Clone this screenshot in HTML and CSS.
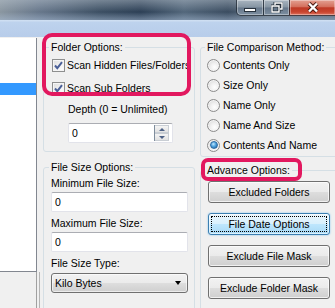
FILE: index.html
```html
<!DOCTYPE html>
<html lang="en">
<head>
    <meta charset="UTF-8">
    <meta name="viewport" content="width=device-width, initial-scale=1.0">
    <title>Compare Options</title>
    <link rel="stylesheet" href="styles.css">
</head>
<body>
    <div class="titlebar">
        <div class="caption-buttons">
            <div class="cap-btn cap-min"><span class="min-glyph"></span></div>
            <div class="cap-btn cap-max">
                <svg width="12" height="11" viewBox="0 0 12 11">
                    <path d="M4 3V1h7v6H9 M1 4h7v6H1z" fill="none" stroke="#27323d" stroke-width="3"/>
                    <path d="M4 3V1h7v6H9 M1 4h7v6H1z" fill="none" stroke="#fff" stroke-width="1.4"/>
                </svg>
            </div>
            <div class="cap-btn cap-close">
                <svg width="14" height="11" viewBox="0 0 14 11">
                    <path d="M3 1.5l8 8 M11 1.5l-8 8" stroke="#4a1a12" stroke-width="4.2"/>
                    <path d="M3 1.5l8 8 M11 1.5l-8 8" stroke="#fff" stroke-width="2.4"/>
                </svg>
            </div>
        </div>
    </div>
    <div class="menu-band"></div>

    <div class="content">
        <div class="left-col">
            <div class="folder-list">
                <div class="list-row selected"></div>
            </div>
            <div class="splitter"></div>
        </div>

        <div class="mid-col">
            <fieldset class="group folder-group">
                <legend>Folder Options:</legend>
                <div class="check-row">
                    <span class="checkbox">
                        <svg width="13" height="13" viewBox="0 0 13 13">
                            <path d="M3 6.5l2.3 2.6L10 3.2" fill="none" stroke="#4a5f97" stroke-width="2"/>
                        </svg>
                    </span>
                    Scan Hidden Files/Folders
                </div>
                <div class="check-row second">
                    <span class="checkbox">
                        <svg width="13" height="13" viewBox="0 0 13 13">
                            <path d="M3 6.5l2.3 2.6L10 3.2" fill="none" stroke="#4a5f97" stroke-width="2"/>
                        </svg>
                    </span>
                    Scan Sub Folders
                </div>
                <div class="depth-label">Depth (0 = Unlimited)</div>
                <div class="spin-box">
                    <span class="field-value">0</span>
                    <div class="spin-buttons">
                        <div class="spin-btn"><span class="arrow-up"></span></div>
                        <div class="spin-btn"><span class="arrow-down"></span></div>
                    </div>
                </div>
            </fieldset>

            <fieldset class="group size-group">
                <legend>File Size Options:</legend>
                <div class="field-label first">Minimum File Size:</div>
                <div class="text-field">0</div>
                <div class="field-label">Maximum File Size:</div>
                <div class="text-field">0</div>
                <div class="field-label">File Size Type:</div>
                <div class="combo">
                    <span>Kilo Bytes</span>
                    <span class="combo-arrow"></span>
                </div>
            </fieldset>

            <div class="highlight highlight-folder"></div>
        </div>

        <div class="right-col">
            <fieldset class="group compare-group">
                <legend>File Comparison Method:</legend>
                <div class="radio-row"><span class="radio"></span>Contents Only</div>
                <div class="radio-row"><span class="radio"></span>Size Only</div>
                <div class="radio-row"><span class="radio"></span>Name Only</div>
                <div class="radio-row"><span class="radio"></span>Name And Size</div>
                <div class="radio-row"><span class="radio checked"></span>Contents And Name</div>
            </fieldset>

            <fieldset class="group advance-group">
                <legend>Advance Options:</legend>
                <button class="btn">Excluded Folders</button>
                <button class="btn focused"><span class="focus-ring">File Date Options</span></button>
                <button class="btn">Exclude File Mask</button>
                <button class="btn">Exclude Folder Mask</button>
            </fieldset>

            <div class="highlight highlight-advance"></div>
        </div>
    </div>
</body>
</html>
```

FILE: styles.css
```css
* {
    box-sizing: border-box;
}

body {
    margin: 0;
    width: 335px;
    height: 308px;
    overflow: hidden;
    background-color: #f0f0f0;
    font-family: "Liberation Sans", Arial, sans-serif;
    font-size: 10.5px;
    color: #000;
}

/* Window chrome */
.titlebar {
    height: 20px;
    display: flex;
    justify-content: flex-end;
    align-items: flex-start;
    background:
        linear-gradient(180deg, rgba(190, 200, 210, 0.45) 0%, rgba(0, 0, 0, 0) 60%, rgba(170, 190, 215, 0.5) 100%),
        linear-gradient(90deg, #8a96a0 0%, #66768a 12%, #3b4e62 30%, #2c3f55 42%, #52667a 55%, #3a4c60 68%, #6b7b8a 80%, #56687a 100%);
}

.caption-buttons {
    display: flex;
    height: 16px;
    margin-right: -1px;
}

.cap-btn {
    height: 16px;
    display: flex;
    align-items: center;
    justify-content: center;
    border: 1px solid rgba(20, 30, 40, 0.75);
    border-top: none;
    box-shadow: inset 0 0 0 1px rgba(255, 255, 255, 0.35);
}

.cap-min {
    width: 27px;
    border-bottom-left-radius: 5px;
    border-right: none;
    background: linear-gradient(180deg, #a9b5c0 0%, #8594a2 48%, #66778a 52%, #7d8fa1 100%);
}

.cap-max {
    width: 26px;
    border-right: none;
    background: linear-gradient(180deg, #a9b5c0 0%, #8594a2 48%, #66778a 52%, #7d8fa1 100%);
}

.cap-close {
    width: 47px;
    background: linear-gradient(180deg, #e3a092 0%, #d4705d 45%, #bf3a26 52%, #c9452f 80%, #df7460 100%);
}

.min-glyph {
    width: 12px;
    height: 4px;
    margin-top: 5px;
    background-color: #fff;
    border: 1px solid #27323d;
}

.menu-band {
    height: 17px;
    background: linear-gradient(180deg, #d2e1f3 0%, #bdd2ed 15%, #b8cdea 100%);
}

/* Main area */
.content {
    display: flex;
    align-items: flex-start;
    height: 271px;
}

.left-col {
    width: 37px;
    height: 271px;
    display: flex;
    flex-direction: column;
}

.folder-list {
    margin-top: 1px;
    height: 234px;
    background-color: #fff;
    border-right: 1px solid #828790;
    border-bottom: 1px solid #828790;
}

.list-row.selected {
    margin-top: 45px;
    height: 12px;
    background-color: #3399ff;
}

.splitter {
    flex: 1;
    width: 4px;
    margin-left: 36px;
    border-left: 1px solid #a0a0a0;
    border-right: 1px solid #b4b4b4;
}

.mid-col {
    position: relative;
    width: 152px;
    margin-left: 6px;
}

.right-col {
    position: relative;
    width: 145px;
    margin-left: 5px;
    flex-shrink: 0;
}

/* Group boxes */
.group {
    margin: 0;
    min-width: 0;
    border: 1px solid #d5dfe5;
    border-radius: 3px;
}

.group legend {
    padding: 0 2px;
    line-height: 13px;
}

.folder-group {
    margin-top: 4px;
    padding: 3px 0 8px 8px;
}

.folder-group legend {
    margin-left: -3px;
}

.size-group {
    margin-top: 9px;
    height: 160px;
    padding: 0 6px 0 7px;
}

.size-group legend {
    margin-left: -2px;
}

.compare-group {
    margin-top: 4px;
    padding: 3px 0 3px 6px;
}

.compare-group legend {
    margin-left: -2px;
}

.advance-group {
    margin-top: 7px;
    height: 150px;
    padding: 4px 0 0 7px;
}

.advance-group legend {
    margin-left: -3px;
}

/* Check boxes */
.check-row {
    display: flex;
    align-items: center;
    gap: 2px;
    height: 16px;
}

.check-row.second {
    margin-top: 7px;
}

.checkbox {
    width: 13px;
    height: 13px;
    border: 1px solid #8e8f8f;
    background: linear-gradient(135deg, #dcdcdc 0%, #f4f4f4 60%, #ffffff 100%);
    box-shadow: inset 0 0 0 1px #f5f5f5;
    display: flex;
}

.checkbox svg {
    margin: -1px;
}

.depth-label {
    margin: 7px 0 0 16px;
    line-height: 13px;
}

.spin-box {
    margin: 7px 0 0 16px;
    width: 105px;
    height: 20px;
    display: flex;
    align-items: center;
    justify-content: space-between;
    background-color: #fff;
    border: 1px solid #e2e3ea;
    border-top-color: #abadb3;
    border-radius: 2px;
}

.field-value {
    padding-left: 3px;
}

.spin-buttons {
    width: 15px;
    height: 16px;
    margin-right: 3px;
    display: flex;
    flex-direction: column;
    border-left: 1px solid #7f8d9c;
}

.spin-btn {
    flex: 1;
    display: flex;
    align-items: center;
    justify-content: center;
    border: 1px solid #c9ced4;
    border-left: none;
    background: linear-gradient(180deg, #f4f4f4, #e2e2e2);
}

.arrow-up,
.arrow-down {
    width: 0;
    height: 0;
    border-left: 3px solid transparent;
    border-right: 3px solid transparent;
}

.arrow-up {
    border-bottom: 3px solid #4d6185;
}

.arrow-down {
    border-top: 3px solid #4d6185;
}

/* File size fields */
.field-label {
    margin-top: 5px;
    line-height: 13px;
}

.field-label.first {
    margin-top: 3px;
}

.text-field {
    margin-top: 2px;
    width: 137px;
    height: 20px;
    padding: 3px 0 0 3px;
    background-color: #fff;
    border: 1px solid #e2e3ea;
    border-top-color: #abadb3;
    border-radius: 2px;
}

.combo {
    margin-top: 3px;
    width: 137px;
    height: 20px;
    padding: 0 6px 0 3px;
    display: flex;
    align-items: center;
    justify-content: space-between;
    border: 1px solid #707070;
    border-radius: 3px;
    background: linear-gradient(180deg, #f2f2f2 0%, #ebebeb 48%, #dddddd 52%, #cfcfcf 100%);
    box-shadow: inset 0 0 0 1px rgba(255, 255, 255, 0.6);
}

.combo-arrow {
    width: 0;
    height: 0;
    border-left: 3.5px solid transparent;
    border-right: 3.5px solid transparent;
    border-top: 4px solid #000;
}

/* Radio buttons */
.radio-row {
    display: flex;
    align-items: center;
    gap: 3px;
    height: 16px;
    margin-bottom: 4px;
}

.radio-row:last-child {
    margin-bottom: 0;
}

.radio {
    width: 13px;
    height: 13px;
    border-radius: 50%;
    border: 1px solid #8c8c8c;
    background: radial-gradient(circle at 60% 65%, #ffffff 0%, #f0f0f0 40%, #cfcfcf 100%);
    box-shadow: inset 0 0 0 1px #f4f4f4;
    display: flex;
    align-items: center;
    justify-content: center;
}

.radio.checked::after {
    content: "";
    width: 6px;
    height: 6px;
    border-radius: 50%;
    background: radial-gradient(circle at 40% 35%, #bfe6ff 0%, #4ea3de 45%, #1c5a95 100%);
    border: 1px solid #2e6ba3;
}

/* Push buttons */
.btn {
    display: block;
    width: 122px;
    height: 22px;
    margin: 0 0 10px 0;
    padding: 0;
    font-family: inherit;
    font-size: 10.5px;
    color: #000;
    border: 1px solid #707070;
    border-radius: 3px;
    background: linear-gradient(180deg, #f2f2f2 0%, #ebebeb 48%, #dddddd 52%, #cfcfcf 100%);
    box-shadow: inset 0 0 0 1px rgba(255, 255, 255, 0.7);
}

.btn.focused {
    border-color: #3c7fb1;
    background: linear-gradient(180deg, #eaf6fd 0%, #d9f0fc 48%, #bee6fd 52%, #a7d9f5 100%);
    box-shadow: inset 0 0 0 1px rgba(255, 255, 255, 0.6), 0 0 2px #7cc1f0;
    padding: 2px;
}

.focus-ring {
    display: flex;
    align-items: center;
    justify-content: center;
    height: 100%;
    border: 1px dotted #000;
}

/* Pink annotation frames */
.highlight {
    position: absolute;
    border: 4px solid #e2185f;
    pointer-events: none;
}

.highlight-folder {
    left: -1px;
    top: -4px;
    width: 149px;
    height: 63px;
    border-radius: 10px;
}

.highlight-advance {
    left: 1px;
    top: 121px;
    width: 101px;
    height: 23px;
    border-radius: 7px;
}
```
